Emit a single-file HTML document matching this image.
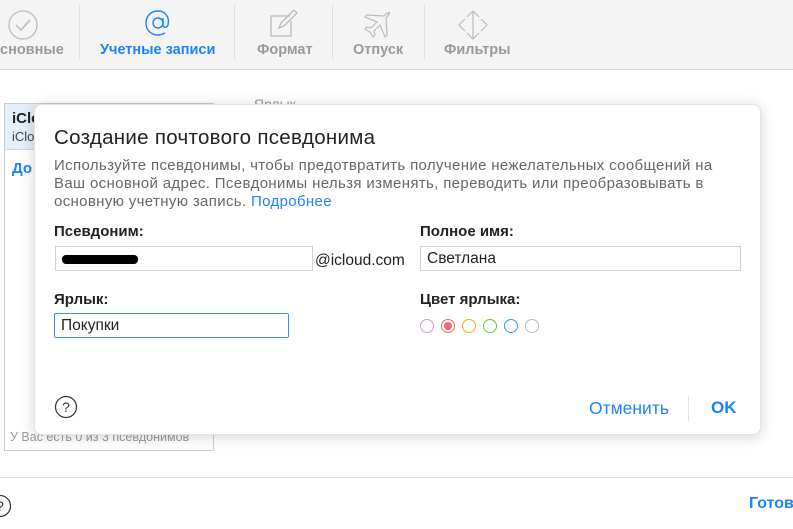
<!DOCTYPE html>
<html><head><meta charset="utf-8"><style>
*{box-sizing:border-box;margin:0;padding:0}
body{width:793px;height:529px;overflow:hidden;background:#fff;font-family:"Liberation Sans",sans-serif;position:relative;color:#222}
.a{position:absolute;white-space:nowrap}
.tb{position:absolute;left:0;top:0;width:793px;height:70px;background:#f4f4f4;border-bottom:1px solid #d8d8d8}
.tl{position:absolute;top:42px;font-size:14.5px;font-weight:bold;color:#999}
.sep{position:absolute;top:4px;width:1px;height:56px;background:#e0e0e0}
.lbl{position:absolute;font-size:15px;font-weight:bold;color:#222}
.in{position:absolute;border:1px solid #d2d2d2;height:25px;font-size:15.5px;padding:3px 6px}
.c{position:absolute;top:319px;width:14px;height:14px;border-radius:50%;border:1.3px solid}
</style></head><body>
<div class="tb">
 <svg class="a" style="left:7px;top:9px" width="32" height="32" viewBox="0 0 32 32"><circle cx="16" cy="16" r="14" fill="none" stroke="#bbb" stroke-width="1.3"/><path d="M9 16l5 5 9-10" fill="none" stroke="#bbb" stroke-width="1.5"/></svg>
 <div class="tl" style="left:0">сновные</div>
 <div class="sep" style="left:79px"></div>
 <svg class="a" style="left:142px;top:7px" width="32" height="32" viewBox="0 0 32 32"><circle cx="16" cy="16" r="5" fill="none" stroke="#1a82fb" stroke-width="1.4"/><path d="M21 11v7c0 3 4 3 5 0 2-8-3-14-10-14C9 4 4 9 4 16s5 12 12 12c3 0 5-1 7-2" fill="none" stroke="#1a82fb" stroke-width="1.4"/></svg>
 <div class="tl" style="left:100px;color:#1a82fb">Учетные записи</div>
 <div class="sep" style="left:234px"></div>
 <svg class="a" style="left:268px;top:8px" width="32" height="32" viewBox="0 0 32 32"><path d="M22 8H3v20h20V13" fill="none" stroke="#bbb" stroke-width="1.3"/><path d="M11 20l2-5 13-13 3 3-13 13z" fill="none" stroke="#bbb" stroke-width="1.3"/></svg>
 <div class="tl" style="left:257px">Формат</div>
 <div class="sep" style="left:332px"></div>
 <svg class="a" style="left:362px;top:9px" width="32" height="32" viewBox="0 0 32 32"><path d="M28 4c-2-1-4 1-6 3L5 6 3 8l12 5-6 6-4-1-2 2 5 3 3 5 2-2-1-4 6-6 5 12 2-2-1-17c2-2 4-4 3-6z" fill="none" stroke="#bbb" stroke-width="1.2"/></svg>
 <div class="tl" style="left:353px">Отпуск</div>
 <div class="sep" style="left:424px"></div>
 <svg class="a" style="left:457px;top:9px" width="32" height="32" viewBox="0 0 32 32"><path d="M16 2v28M10 8l6-6 6 6M10 24l6 6 6-6M8 10l-6 6 6 6h0M24 10l6 6-6 6" fill="none" stroke="#bbb" stroke-width="1.2"/></svg>
 <div class="tl" style="left:444px">Фильтры</div>
</div>
<div class="a" style="left:4px;top:103px;width:210px;height:348px;border:1px solid #ccc"></div>
<div class="a" style="left:5px;top:104px;width:208px;height:46px;background:#e3eef9;border-bottom:1px solid #cfd8e0"></div>
<div class="a" style="left:12px;top:110px;font-size:15px;font-weight:bold">iCloud</div>
<div class="a" style="left:12px;top:129px;font-size:13px;color:#444">iCloud</div>
<div class="a" style="left:12px;top:160px;font-size:15px;font-weight:bold;color:#1a82fb">До</div>
<div class="a" style="left:10px;top:430px;font-size:12.5px;color:#999">У Вас есть 0 из 3 псевдонимов</div>
<div class="a" style="left:254px;top:96px;font-size:14px;color:#999">Ярлык</div>
<div class="a" style="left:0;top:477px;width:793px;height:1px;background:#ddd"></div>
<svg class="a" style="left:-12px;top:494px" width="24" height="24" viewBox="0 0 24 24"><circle cx="12" cy="12" r="10.5" fill="none" stroke="#333" stroke-width="1.2"/><text x="12" y="17" font-size="14" text-anchor="middle" fill="#333" font-family="Liberation Sans">?</text></svg>
<div class="a" style="left:749px;top:495px;font-size:16px;font-weight:bold;color:#1a82fb">Готово</div>

<div class="a" style="left:34px;top:104px;width:727px;height:331px;background:#fff;border-radius:8px;box-shadow:0 2px 14px rgba(0,0,0,.18);border:1px solid #e2e2e2">
 <div class="a" style="left:19px;top:21px;font-size:20.5px;letter-spacing:0.3px;color:#222">Создание почтового псевдонима</div>
 <div class="a" style="left:19px;top:52px;font-size:15px;letter-spacing:0.35px;color:#666;line-height:18px">Используйте псевдонимы, чтобы предотвратить получение нежелательных сообщений на<br>Ваш основной адрес. Псевдонимы нельзя изменять, переводить или преобразовывать в<br>основную учетную запись. <span style="color:#1a82fb">Подробнее</span></div>
 <div class="lbl" style="left:19px;top:118px">Псевдоним:</div>
 <div class="in" style="left:20px;top:141px;width:258px"><span style="display:inline-block;width:76px;height:9px;background:#000;border-radius:4px;margin-top:5px"></span></div>
 <div class="a" style="left:280px;top:147px;font-size:15.5px">@icloud.com</div>
 <div class="lbl" style="left:385px;top:118px">Полное имя:</div>
 <div class="in" style="left:385px;top:141px;width:321px">Светлана</div>
 <div class="lbl" style="left:19px;top:186px">Ярлык:</div>
 <div class="in" style="left:19px;top:208px;width:235px;border:1.5px solid #3d8ef5;border-radius:2px">Покупки</div>
 <div class="lbl" style="left:385px;top:186px">Цвет ярлыка:</div>
</div>
<div class="c" style="left:420px;border-color:#dd8ee8"></div>
<div class="c" style="left:441px;border-color:#f46a6a"><div style="margin:2px;width:8px;height:8px;border-radius:50%;background:#f46a6a"></div></div>
<div class="c" style="left:462px;border-color:#f6a623"></div>
<div class="c" style="left:483px;border-color:#6ac33a"></div>
<div class="c" style="left:504px;border-color:#2a9df4"></div>
<div class="c" style="left:525px;border-color:#bbb"></div>
<svg class="a" style="left:54px;top:395px" width="24" height="24" viewBox="0 0 24 24"><circle cx="12" cy="12" r="10.5" fill="none" stroke="#333" stroke-width="1.2"/><text x="12" y="17" font-size="14" text-anchor="middle" fill="#333" font-family="Liberation Sans">?</text></svg>
<div class="a" style="left:589px;top:398px;font-size:17.5px;color:#1a82fb">Отменить</div>
<div class="a" style="left:688px;top:396px;width:1px;height:25px;background:#e2e2e2"></div>
<div class="a" style="left:711px;top:398px;font-size:17px;font-weight:bold;color:#1a82fb">OK</div>
</body></html>
